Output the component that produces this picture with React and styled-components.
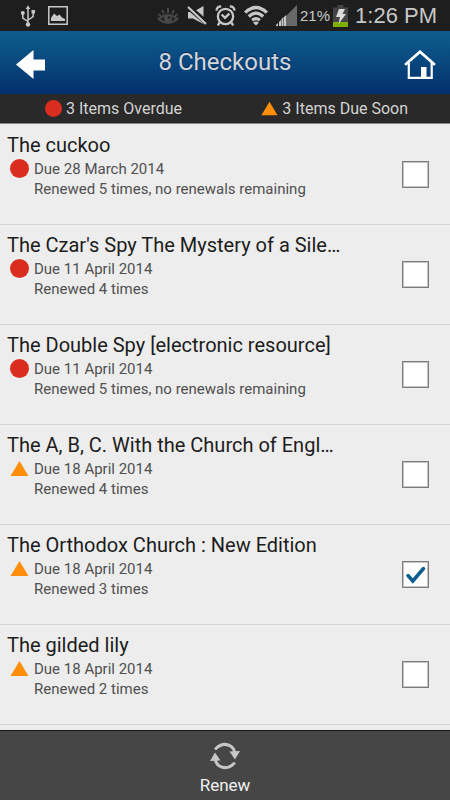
import { useState } from "react";
import styled, { createGlobalStyle } from "styled-components";

const GlobalStyle = createGlobalStyle`
  * {
    box-sizing: border-box;
  }
  body {
    margin: 0;
    background: #ededed;
    font-family: Roboto, "Liberation Sans", sans-serif;
  }
`;

const Page = styled.div`
  display: flex;
  flex-direction: column;
  height: 100vh;
  overflow: hidden;
`;

const StatusBar = styled.div`
  display: flex;
  flex: none;
  align-items: center;
  justify-content: space-between;
  height: 31px;
  padding: 0 13px 0 20px;
  background: #1e1e1e;
  color: #c8c8c8;
  font-family: "Liberation Sans", sans-serif;
  svg {
    display: block;
  }
`;

const StatusGroup = styled.div`
  display: flex;
  align-items: center;
  gap: ${(props) => props.$gap}px;
`;

const Battery = styled.span`
  font-size: 15px;
`;

const Clock = styled.span`
  margin-left: 4px;
  font-size: 22px;
`;

const Header = styled.header`
  display: flex;
  flex: none;
  align-items: center;
  justify-content: space-between;
  height: 63px;
  padding: 0 14px;
  background: linear-gradient(#0d5e8e, #05306e);
  h1 {
    margin: 0;
    color: #d3d6dc;
    font-size: 24px;
    font-weight: 400;
    line-height: 28px;
    padding-bottom: 2px;
    text-shadow: 0 -1px 1px #0a2a50;
  }
`;

const IconButton = styled.button`
  display: flex;
  padding: 4px 0 0;
  border: 0;
  background: none;
  cursor: pointer;
`;

const Summary = styled.div`
  display: flex;
  flex: none;
  justify-content: space-between;
  height: 30px;
  padding: 0 42px 0 45px;
  border-bottom: 1px solid #8a8a8a;
  background: #292929;
  color: #d3d3d3;
`;

const SummaryItem = styled.div`
  display: flex;
  align-items: center;
  gap: 4px;
  font-size: 16px;
  line-height: 20px;
`;

const List = styled.ul`
  flex: 1;
  min-height: 0;
  margin: 0;
  padding: 1px 0 0;
  overflow: hidden;
  list-style: none;
`;

const Row = styled.li`
  display: flex;
  align-items: center;
  justify-content: space-between;
  height: 100px;
  padding: 0 21px 0 7px;
  border-bottom: 1px solid #d6d6d6;
`;

const Info = styled.label`
  flex: 1;
  align-self: flex-start;
  padding-top: 7px;
  cursor: pointer;
`;

const Title = styled.div`
  color: #1c1c1c;
  font-size: 20px;
  line-height: 27px;
`;

const Details = styled.div`
  display: grid;
  grid-template-columns: 24px 1fr;
  column-gap: 3px;
  color: #505050;
  font-size: 15px;
  line-height: 20px;
  svg {
    justify-self: center;
  }
  p {
    grid-column: 2;
    margin: 0;
  }
`;

const Tick = styled.input`
  appearance: none;
  width: 27px;
  height: 27px;
  margin: 0;
  border: 1px solid #7c7c7c;
  box-shadow: inset 0 0 0 1px #c4c4c4;
  background: #fff;
  cursor: pointer;
`;

const TickBox = styled.span`
  position: relative;
  display: flex;
  svg {
    position: absolute;
    inset: 0;
    pointer-events: none;
  }
`;

const Footer = styled.footer`
  display: flex;
  flex: none;
  justify-content: center;
  height: 70px;
  border-top: 1px solid #151515;
  background: #464646;
`;

const RenewButton = styled.button`
  display: flex;
  flex-direction: column;
  align-items: center;
  gap: 3px;
  padding: 11px 20px 0;
  border: 0;
  background: none;
  color: #f0f0f0;
  font-family: inherit;
  font-size: 17px;
  line-height: 24px;
  cursor: pointer;
`;

const checkouts = [
  { id: 1, title: "The cuckoo", due: "28 March 2014", renewed: "Renewed 5 times, no renewals remaining", overdue: true },
  { id: 2, title: "The Czar's Spy The Mystery of a Sile…", due: "11 April 2014", renewed: "Renewed 4 times", overdue: true },
  { id: 3, title: "The Double Spy [electronic resource]", due: "11 April 2014", renewed: "Renewed 5 times, no renewals remaining", overdue: true },
  { id: 4, title: "The A, B, C. With the Church of Engl…", due: "18 April 2014", renewed: "Renewed 4 times", overdue: false },
  { id: 5, title: "The Orthodox Church : New Edition", due: "18 April 2014", renewed: "Renewed 3 times", overdue: false },
  { id: 6, title: "The gilded lily", due: "18 April 2014", renewed: "Renewed 2 times", overdue: false },
];

const Marker = ({ overdue, size }) => (
  <svg width={size} height={size} viewBox="0 0 20 20">
    {overdue ? <circle cx="10" cy="10" r="10" fill="#d92d20" /> : <path d="M10 2L19.5 18H.5z" fill="#ff8f0a" />}
  </svg>
);

const UsbIcon = () => (
  <svg width="16" height="24" viewBox="0 0 16 24" fill="none" stroke="#c8c8c8" strokeWidth="1.5">
    <path d="M8 4v16M8 17.5L2.8 14V9.5M8 16l5.2-3.5V8.5" />
    <path d="M8 1.2L10.3 5H5.7zM11.5 6H15v3.5h-3.5z" fill="#c8c8c8" stroke="none" />
    <circle cx="2.8" cy="9" r="2" fill="#c8c8c8" stroke="none" />
    <circle cx="8" cy="20.5" r="2.2" fill="#c8c8c8" stroke="none" />
  </svg>
);

const PictureIcon = () => (
  <svg width="20" height="19" viewBox="0 0 20 19">
    <path d="M.8.8h18.4v17.4H.8z" fill="none" stroke="#c8c8c8" strokeWidth="1.5" />
    <path d="M3 15v-3l3-4.5 3 2.5 2.5-1.500 2.500 3 3 1.500v2z" fill="#c8c8c8" />
  </svg>
);

const EyeIcon = () => (
  <svg width="22" height="20" viewBox="0 0 22 20" fill="none" stroke="#484848" strokeWidth="2">
    <path d="M1.500 13Q11 5 20.500 13Q11 20.500 1.500 13zM11 2v5M5 4l2 3.500M17 4l-2 3.500M1.500 8l2.500 2M20.500 8L18 10" />
    <circle cx="11" cy="12.500" r="4" fill="#484848" stroke="none" />
    <circle cx="12" cy="11.500" r="1.200" fill="#1e1e1e" stroke="none" />
  </svg>
);

const MuteIcon = () => (
  <svg width="20" height="21" viewBox="0 0 20 21">
    <path d="M1 7h5L16.500 1v18L6 13.500H1z" fill="#c8c8c8" />
    <path d="M0 1l20 17" stroke="#1e1e1e" strokeWidth="5.500" />
    <path d="M1 2l18 17" stroke="#c8c8c8" strokeWidth="2.200" />
  </svg>
);

const AlarmIcon = () => (
  <svg width="21" height="23" viewBox="0 0 22 23" fill="none" stroke="#c8c8c8" strokeWidth="2.4">
    <circle cx="11" cy="12.500" r="8" />
    <path d="M7 10.500l3.500 3.500 4.500-4.500M1.500 6.500Q2 2 6.500 2M20.500 6.500Q20 2 15.500 2M5 18.500l-2 3.500M17 18.500l2 3.500" />
  </svg>
);

const WifiIcon = () => (
  <svg width="24" height="21" viewBox="0 0 25 21" fill="none" stroke="#c8c8c8" strokeWidth="3.4">
    <path d="M1.200 7.500Q12.500-3 23.800 7.500M5 11.500Q12.500 4.500 20 11.500M8.500 15.500Q12.500 12 16.500 15.500" />
    <path d="M9.500 18Q12.500 15.500 15.500 18L12.500 21z" fill="#c8c8c8" stroke="none" />
  </svg>
);

const SignalIcon = () => (
  <svg width="21" height="21" viewBox="0 0 21 21">
    <path d="M21 0v21H10V11z" fill="#686868" />
    <path d="M0 21v-1l2-2v3zM3 21v-4l2-2v6zM5.500 21v-7l2-2v9zM8 21v-9l2-2v11z" fill="#c8c8c8" />
  </svg>
);

const BatteryIcon = () => (
  <svg width="15" height="22" viewBox="0 0 15 22">
    <path d="M0 2.500h4.500V0h6v2.500H15V17H0z" fill="#444" />
    <path d="M0 17h15v5H0z" fill="#7fad00" />
    <path d="M6 4h6L9.500 9H13L5.500 19l1.500-7H3z" fill="#dcdcdc" />
  </svg>
);

const BackIcon = () => (
  <svg width="32" height="30" viewBox="0 0 32 30">
    <path d="M2 14.500L19.500 0v9.500H31v11H19.500V29z" fill="#fff" />
  </svg>
);

const HomeIcon = () => (
  <svg width="32" height="30" viewBox="0 0 32 30" fill="none" stroke="#fff">
    <path d="M2 14L16 1.800 30 14" strokeWidth="2.8" strokeLinecap="round" />
    <path d="M4.800 13v14.800h22.900V13" strokeWidth="2.2" />
    <path d="M17 17h5.500v11H17z" fill="#fff" stroke="none" />
  </svg>
);

const CheckIcon = () => (
  <svg width="27" height="27" viewBox="0 0 27 27">
    <path d="M6 14.500l4.800 5.500L21.500 7.500" fill="none" stroke="#0d5e8e" strokeWidth="3.5" strokeLinecap="round" />
  </svg>
);

const RenewIcon = () => (
  <svg width="30" height="28" viewBox="0 0 30 28">
    <path d="M6 6.500Q13-.5 21 4.300Q24 6.500 24.500 10M24 21.500Q17 28.500 9 23.700Q6 21.500 5.500 18" fill="none" stroke="#c6c6c6" strokeWidth="3" strokeLinecap="round" />
    <path d="M19.500 9.500L30 9l-5 8.500zM10.500 18.500L0 19l5-8.500z" fill="#c6c6c6" />
  </svg>
);

const Checkout = (props) => {
  const { data, checked, toggle } = props;

  return (
    <Row>
      <Info htmlFor={`check-${data.id}`}>
        <Title>{data.title}</Title>
        <Details>
          <Marker overdue={data.overdue} size={19} />
          <p>Due {data.due}</p>
          <p>{data.renewed}</p>
        </Details>
      </Info>
      <TickBox>
        <Tick id={`check-${data.id}`} type="checkbox" checked={checked} onChange={() => toggle(data.id)} />
        {checked && <CheckIcon />}
      </TickBox>
    </Row>
  );
};

const App = () => {
  const [selected, setSelected] = useState([5]);

  const toggle = (id) => {
    setSelected(selected.includes(id) ? selected.filter((item) => item !== id) : [...selected, id]);
  };

  return (
    <Page>
      <GlobalStyle />
      <StatusBar>
        <StatusGroup $gap={12}>
          <UsbIcon />
          <PictureIcon />
        </StatusGroup>
        <StatusGroup $gap={3}>
          <StatusGroup $gap={8}>
            <EyeIcon />
            <MuteIcon />
            <AlarmIcon />
            <WifiIcon />
            <SignalIcon />
          </StatusGroup>
          <Battery>21%</Battery>
          <BatteryIcon />
          <Clock>1:26 PM</Clock>
        </StatusGroup>
      </StatusBar>
      <Header>
        <IconButton aria-label="Back">
          <BackIcon />
        </IconButton>
        <h1>8 Checkouts</h1>
        <IconButton aria-label="Home">
          <HomeIcon />
        </IconButton>
      </Header>
      <Summary>
        <SummaryItem>
          <Marker overdue size={17} />
          3 Items Overdue
        </SummaryItem>
        <SummaryItem>
          <Marker size={17} />
          3 Items Due Soon
        </SummaryItem>
      </Summary>
      <List>
        {checkouts.map((item) => (
          <Checkout key={item.id} data={item} checked={selected.includes(item.id)} toggle={toggle} />
        ))}
      </List>
      <Footer>
        <RenewButton>
          <RenewIcon />
          Renew
        </RenewButton>
      </Footer>
    </Page>
  );
};

export default App;
